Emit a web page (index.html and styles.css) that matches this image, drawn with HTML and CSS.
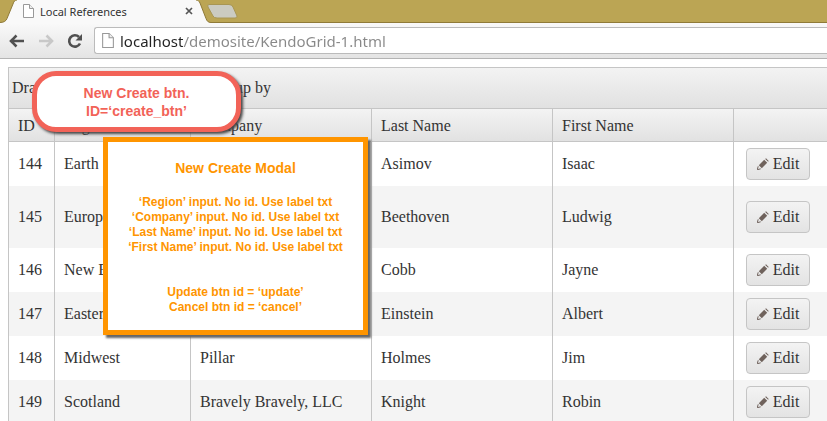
FILE: index.html
```html
<!DOCTYPE html>
<html lang="en">
<head>
	<meta charset="UTF-8">
	<title>Local References</title>
	<link rel="stylesheet" href="styles.css">
</head>
<body>
	<svg class="defs" width="0" height="0">
		<symbol id="page" viewBox="0 0 11 14"><path d="M.5.5h6l4 4v9H.5z" fill="#fff" stroke="#999"/><path d="M6.5.5v4h4" fill="#eee" stroke="#999"/></symbol>
		<symbol id="pencil" viewBox="0 0 12 12"><path d="M1.800 7.200 7.200 1.800l3 3-5.400 5.400z" fill="#6f625c"/><path d="M8.200.900 9 .300 11.700 3l-.600.800z" fill="#6f625c"/><path d="M1.200 8.300.300 11.700l3.400-.900" fill="none" stroke="#6f625c"/></symbol>
	</svg>
	<div class="tabs">
		<svg class="shape" width="245" height="24">
			<path d="M0 24V22.500C4 22.500 6 21 7 18.500L13 4C14 1 15 0 17 0H196C198 0 199 1 200 3L206 18.500C207 21 208 22.500 211 22.500V24z" fill="#f9f9f9"/>
			<path d="M0 22.500C4 22.500 6 21 7 18.500L13 4C14 1 15 0 17 0M196 0C198 0 199 1 200 3L206 18.500C207 21 208 22.500 211 22.500" fill="none" stroke="#8f7a38"/>
			<path d="M209 4.500H229Q232 4.500 233 7L237 16Q237.500 18 235 18H217Q214 18 213 16L208 7Q207 4.500 209 4.500z" fill="#cbcbc1" stroke="#a89654"/>
		</svg>
		<div class="tab">
			<svg width="11" height="14"><use href="#page"/></svg>
			<span>Local References</span>
			<button class="close" aria-label="Close"><svg width="8" height="8"><path d="M1 1l6 6M7 1L1 7" stroke="#555" stroke-width="1.700"/></svg></button>
		</div>
	</div>
	<div class="toolbar">
		<button aria-label="Back"><svg width="16" height="14"><path d="M15 7H2.500M7.500 1.500L2 7l5.500 5.500" fill="none" stroke="#505050" stroke-width="2.600"/></svg></button>
		<button aria-label="Forward"><svg width="16" height="14"><path d="M1 7h12.500M8.500 1.500L14 7l-5.500 5.500" fill="none" stroke="#c8c8c8" stroke-width="2.600"/></svg></button>
		<button aria-label="Reload"><svg width="16" height="16"><path d="M13 10.500A5.700 5.700 0 1 1 12 4" fill="none" stroke="#505050" stroke-width="2.600"/><path d="M15 1v6.500H8.500z" fill="#505050"/></svg></button>
		<div class="address">
			<svg width="12" height="15"><use href="#page"/></svg>
			<input type="text" aria-label="Address" value="localhost/demosite/KendoGrid-1.html">
		</div>
	</div>
	<div class="grid">
		<div class="group">Drag a column heading here to group by</div>
		<table>
			<colgroup><col class="id"><col class="region"><col class="name"><col class="name"><col class="name"><col></colgroup>
			<thead>
				<tr><th>ID</th><th>Region</th><th>Company</th><th>Last Name</th><th>First Name</th><th></th></tr>
			</thead>
			<tbody>
				<tr><td>144</td><td>Earth</td><td></td><td>Asimov</td><td>Isaac</td><td><button class="edit"><svg width="12" height="12"><use href="#pencil"/></svg>Edit</button></td></tr>
				<tr class="tall"><td>145</td><td>Europe</td><td></td><td>Beethoven</td><td>Ludwig</td><td><button class="edit"><svg width="12" height="12"><use href="#pencil"/></svg>Edit</button></td></tr>
				<tr><td>146</td><td>New England</td><td></td><td>Cobb</td><td>Jayne</td><td><button class="edit"><svg width="12" height="12"><use href="#pencil"/></svg>Edit</button></td></tr>
				<tr><td>147</td><td>Eastern</td><td></td><td>Einstein</td><td>Albert</td><td><button class="edit"><svg width="12" height="12"><use href="#pencil"/></svg>Edit</button></td></tr>
				<tr><td>148</td><td>Midwest</td><td>Pillar</td><td>Holmes</td><td>Jim</td><td><button class="edit"><svg width="12" height="12"><use href="#pencil"/></svg>Edit</button></td></tr>
				<tr><td>149</td><td>Scotland</td><td>Bravely Bravely, LLC</td><td>Knight</td><td>Robin</td><td><button class="edit"><svg width="12" height="12"><use href="#pencil"/></svg>Edit</button></td></tr>
			</tbody>
		</table>
	</div>
	<div class="note create">
		<p>New Create btn.</p>
		<p>ID=‘create_btn’</p>
	</div>
	<div class="note modal">
		<h2>New Create Modal</h2>
		<p>‘Region’ input. No id. Use label txt</p>
		<p>‘Company’ input. No id. Use label txt</p>
		<p>‘Last Name’ input. No id. Use label txt</p>
		<p>‘First Name’ input. No id. Use label txt</p>
		<div class="btns">
			<p>Update btn id = ‘update’</p>
			<p>Cancel btn id = ‘cancel’</p>
		</div>
	</div>
</body>
</html>
```
FILE: styles.css
```css
*{margin: 0;padding: 0;box-sizing: border-box;}
html{overflow: hidden;}
body{position: relative;background: #fff;color: #333;font-family: "Liberation Serif",serif;font-size: 16px;}
button{border: 0;background: none;font: inherit;color: inherit;}
svg{display: block;flex: none;}
.defs{position: absolute;}

.tabs{position: relative;height: 23px;background: #bba554;border-bottom: 1px solid #8f7a38;}
.shape{position: absolute;left: 0;top: 0;}
.tab{position: relative;display: flex;align-items: center;width: 193px;height: 22px;padding-left: 23px;gap: 6px;font: 11px "Noto Sans",sans-serif;}
.close{margin-left: auto;}
.toolbar{display: flex;align-items: center;height: 36px;padding-left: 9px;gap: 13px;background: linear-gradient(#f9f9f9,#e4e4e4);border-bottom: 1px solid #b4b4b4;}
.address{display: flex;align-items: center;flex: 1;height: 27px;margin-left: -2px;padding-left: 7px;gap: 6px;background: #fff;border: 1px solid #bbb;border-right: 0;border-radius: 3px 0 0 3px;}
.address input{flex: 1;min-width: 0;border: 0;outline: 0;font: 15px "Noto Sans",sans-serif;color: transparent;background: linear-gradient(90deg,#222 63px,#888 63px);-webkit-background-clip: text;background-clip: text;}

.grid{margin: 8px 0 0 8px;border: 1px solid #c5c5c5;border-right: 0;}
.group{height: 41px;padding-left: 3px;line-height: 40px;background: linear-gradient(#f3f3f3,#e1e1e1);border-bottom: 1px solid #c5c5c5;}
table{width: 100%;table-layout: fixed;border-collapse: separate;border-spacing: 0;}
.id{width: 45px;}
.region{width: 136px;}
.name{width: 181px;}
thead tr{height: 33px;background: linear-gradient(#f3f3f3,#e1e1e1);}
th{padding: 2px 0 0 9px;font-weight: normal;text-align: left;border-left: 1px solid #c5c5c5;border-bottom: 1px solid #c5c5c5;}
td{height: 44px;padding-left: 9px;white-space: nowrap;border-left: 1px solid #c5c5c5;}
th:first-child,td:first-child{border-left: 0;}
.tall td{height: 62px;}
tbody tr:nth-child(even){background: #f4f4f4;}
.edit{display: flex;align-items: center;justify-content: center;width: 64px;height: 32px;margin-left: 3px;gap: 4px;border: 1px solid #c5c5c5;border-radius: 4px;background: linear-gradient(#f3f3f3,#e3e3e3);}

.note{position: absolute;background: #fff;font: bold 12px/15px "Liberation Sans",sans-serif;text-align: center;}
.create{left: 32px;top: 71px;width: 209px;height: 61px;padding-top: 8px;border: 5px solid #f26358;border-radius: 24px;color: #f26358;font-size: 14px;line-height: 18px;box-shadow: 2px 2px 3px #444;}
.modal{left: 103px;top: 137px;width: 265px;height: 198px;padding-top: 16px;border: 5px solid #ff9500;color: #ff9500;box-shadow: 3px 3px 2px #666;}
.modal h2{margin-bottom: 17px;font-size: 14px;line-height: 20px;}
.btns{margin-top: 30px;}
```
